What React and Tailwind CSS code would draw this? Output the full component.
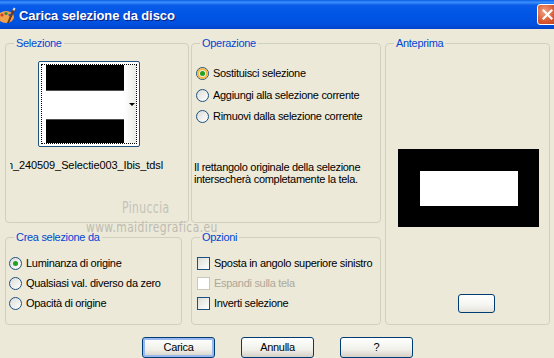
import React from 'react';

const font = { fontFamily: '"Liberation Sans", Arial, sans-serif' };

function Group({ title, className, children }) {
  return (
    <fieldset className={`border border-[#d0d0bf] rounded-[4px] px-[6px] ${className}`}>
      <legend className="ml-[2px] px-[2px] text-[11px] leading-[13px] text-[#0046d5]">{title}</legend>
      {children}
    </fieldset>
  );
}

function Radio({ checked, focus, label, h = 'h-[21px]' }) {
  return (
    <div className={`flex items-center ${h}`}>
      <span className="relative w-[13px] h-[13px] shrink-0 rounded-full border border-[#1c5180] bg-[linear-gradient(135deg,#dcdcd7,#ffffff)] flex items-center justify-center">
        {focus && <span className="absolute inset-0 rounded-full border-2 border-[#f5b83c]" />}
        {checked && <span className="relative w-[5px] h-[5px] rounded-full bg-[#21a121]" />}
      </span>
      <span className="ml-[4px] whitespace-nowrap">{label}</span>
    </div>
  );
}

function Check({ label, disabled }) {
  return (
    <div className="flex items-center h-[20px]">
      <span
        className={`w-[13px] h-[13px] shrink-0 border ${
          disabled ? 'border-[#cac8bb] bg-white' : 'border-[#1c5180] bg-[linear-gradient(135deg,#dcdcd7,#ffffff)]'
        }`}
      />
      <span className={`ml-[4px] whitespace-nowrap ${disabled ? 'text-[#aca899]' : ''}`}>{label}</span>
    </div>
  );
}

function XpButton({ children, isDefault }) {
  return (
    <button
      className={`w-[73px] h-[21px] rounded-[3px] border border-[#003c74] bg-[linear-gradient(180deg,#ffffff,#f0f0ea_60%,#d6d0c5)] text-[11px] text-black ${
        isDefault ? 'shadow-[inset_0_0_0_2px_#9ab8f0]' : ''
      }`}
    >
      {children}
    </button>
  );
}

export default function App() {
  return (
    <div
      className="relative w-[554px] h-[358px] overflow-hidden bg-[#ece9d8] text-[11px] leading-[13px] tracking-[-0.3px] text-black"
      style={font}
    >
      {/* Title bar */}
      <div className="h-[29px] pt-[2px] flex items-center bg-[linear-gradient(180deg,#0a5fe4_0%,#3d8ffc_8%,#0a5ce9_18%,#0055e5_50%,#0050de_85%,#0042c8_100%)]">
        <svg width="18" height="18" viewBox="0 0 18 18" className="-ml-[2px] shrink-0">
          <ellipse cx="8" cy="10" rx="8" ry="6" fill="#f2a14d" />
          <circle cx="4" cy="8" r="1.6" fill="#d3392b" />
          <circle cx="8" cy="6.5" r="1.6" fill="#2d8a3a" />
          <circle cx="12" cy="8" r="1.6" fill="#2f5fd0" />
          <path d="M9 16 L15 2 L17 3 L11 16 Z" fill="#6b3a1c" />
          <path d="M14.5 3 L15.8 0.5 L17.5 1.5 L16.5 3.8 Z" fill="#e8e0d0" />
        </svg>
        <span className="ml-[3px] text-[13px] font-bold text-white tracking-[-0.1px] [text-shadow:1px_1px_0_#0a1e7a]">
          Carica selezione da disco
        </span>
        <div className="ml-auto mr-[-4px] -mt-[2px] w-[21px] h-[21px] rounded-[3px] border border-white bg-[radial-gradient(circle_at_35%_35%,#f0a080,#d8552e_60%,#b8401e)] flex items-center justify-center">
          <svg width="11" height="11" viewBox="0 0 11 11">
            <path d="M1.5 1.5 L9.5 9.5 M9.5 1.5 L1.5 9.5" stroke="white" strokeWidth="2.2" strokeLinecap="square" />
          </svg>
        </div>
      </div>

      {/* Body */}
      <div className="flex pl-[5px] pt-[8px]">
        <div className="w-[177px] flex flex-col">
          <Group title="Selezione" className="h-[186px] relative">
            <div className="flex pt-[11px] pl-[26px]">
              <div className="w-[102px] h-[86px] rounded-[2px] border border-[#1c5180] bg-white p-[2px]">
                <div className="relative h-full border border-dotted border-black flex">
                  <div className="w-[78px] ml-[4px] flex flex-col">
                    <div className="h-[26px] bg-black border-b border-[#505050]" />
                    <div className="h-[28px] bg-white" />
                    <div className="h-[24px] bg-black border-t border-[#505050]" />
                  </div>
                  <div className="flex-1 bg-[linear-gradient(90deg,#ffffff,#ecece6)] flex items-center justify-end pr-[1px]">
                    <span className="w-0 h-0 border-l-[3px] border-r-[3px] border-t-[3px] border-l-transparent border-r-transparent border-t-black" />
                  </div>
                </div>
              </div>
            </div>
            <div className="mt-[12px] w-[153px] -ml-[2px] overflow-hidden flex justify-end whitespace-nowrap tracking-[-0.1px]">
              n_240509_Selectie003_Ibis_tdsl
            </div>
            <div
              className="mt-[30px] ml-[110px] text-[15px] tracking-[0.5px] text-[#c4c2b8] [transform:scaleX(0.8)] origin-left"
              style={{ fontFamily: '"DejaVu Sans Condensed", "DejaVu Sans", sans-serif' }}
            >
              Pinuccia
            </div>
          </Group>
          <Group title="Crea selezione da" className="mt-[8px] h-[94px]">
            <div className="pt-[9px] -ml-[3px]">
              <Radio checked h="h-[20px]" label="Luminanza di origine" />
              <Radio h="h-[20px]" label="Qualsiasi val. diverso da zero" />
              <Radio h="h-[20px]" label="Opacità di origine" />
            </div>
          </Group>
        </div>

        <div className="ml-[9px] w-[190px] flex flex-col">
          <Group title="Operazione" className="h-[186px]">
            <div className="pt-[12px] -ml-[2px]">
              <Radio checked focus h="h-[22px]" label="Sostituisci selezione" />
              <Radio h="h-[22px]" label="Aggiungi alla selezione corrente" />
              <Radio h="h-[21px]" label="Rimuovi dalla selezione corrente" />
            </div>
            <p className="mt-[34px] -ml-[4px] leading-[12px]">
              Il rettangolo originale della selezione
              <br />
              intersecherà completamente la tela.
            </p>
          </Group>
          <Group title="Opzioni" className="mt-[8px] h-[94px]">
            <div className="pt-[9px] -ml-[1px]">
              <Check label="Sposta in angolo superiore sinistro" />
              <Check disabled label="Espandi sulla tela" />
              <Check label="Inverti selezione" />
            </div>
          </Group>
        </div>

        <div className="ml-[4px] w-[165px]">
          <Group title="Anteprima" className="h-[288px] flex flex-col items-start">
            <div className="mt-[99px] ml-[6px] w-[141px] h-[78px] bg-black flex items-center justify-center">
              <div className="w-[98px] h-[35px] bg-white" />
            </div>
            <div className="mt-[67px] ml-[66px] w-[37px] h-[19px] rounded-[3px] border border-[#003c74] bg-[linear-gradient(180deg,#ffffff,#f4f4f0_60%,#e4e2da)]" />
          </Group>
        </div>
      </div>

      {/* watermark */}
      <div
        className="absolute left-[86px] top-[221px] text-[14px] tracking-[0.5px] text-[#bdbbb2] [transform:scaleX(0.85)] origin-left whitespace-nowrap"
        style={{ fontFamily: '"DejaVu Sans Condensed", "DejaVu Sans", sans-serif' }}
      >
        www.maidiregrafica.eu
      </div>

      {/* Buttons */}
      <div className="flex pl-[142px] gap-[26px] mt-[12px]">
        <XpButton isDefault>Carica</XpButton>
        <XpButton>Annulla</XpButton>
        <XpButton>?</XpButton>
      </div>
    </div>
  );
}
